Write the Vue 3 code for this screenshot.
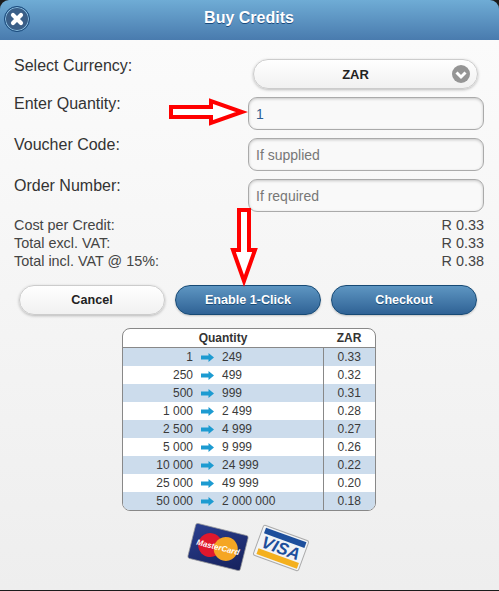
<script setup>
const rows = [
  ['1', '249', '0.33'], ['250', '499', '0.32'], ['500', '999', '0.31'],
  ['1 000', '2 499', '0.28'], ['2 500', '4 999', '0.27'], ['5 000', '9 999', '0.26'],
  ['10 000', '24 999', '0.22'], ['25 000', '49 999', '0.20'], ['50 000', '2 000 000', '0.18']
]
const summary = [
  ['Cost per Credit:', 'R 0.33'], ['Total excl. VAT:', 'R 0.33'], ['Total incl. VAT @ 15%:', 'R 0.38']
]
</script>

<template>
  <div class="dialog">
    <header class="head">
      <button class="close" aria-label="Close">
        <svg width="18" height="18" viewBox="0 0 18 18"><path d="M5 5l8 8M13 5l-8 8" stroke="#fff" stroke-width="4.200" stroke-linecap="round"/></svg>
      </button>
      <h1>Buy Credits</h1>
    </header>
    <main class="body">
      <div class="row first">
        <label>Select Currency:</label>
        <div class="select">
          <span>ZAR</span>
          <i class="chev"><svg width="18" height="18" viewBox="0 0 18 18"><path d="M4.500 7.500l4.500 4.500 4.500-4.500" fill="none" stroke="#fff" stroke-width="3"/></svg></i>
        </div>
      </div>
      <div class="row"><label>Enter Quantity:</label><input class="inp val" value="1" /></div>
      <div class="row"><label>Voucher Code:</label><input class="inp" placeholder="If supplied" /></div>
      <div class="row"><label>Order Number:</label><input class="inp" placeholder="If required" /></div>

      <div class="summary">
        <div v-for="s in summary" :key="s[0]" class="sumrow"><span>{{ s[0] }}</span><span>{{ s[1] }}</span></div>
      </div>

      <div class="buttons">
        <button class="btn light">Cancel</button>
        <button class="btn blue">Enable 1-Click</button>
        <button class="btn blue">Checkout</button>
      </div>

      <div class="tablewrap">
        <table>
          <colgroup><col class="c1" /><col class="c2" /><col /><col class="c4" /></colgroup>
          <thead><tr><th colspan="3">Quantity</th><th>ZAR</th></tr></thead>
          <tbody>
            <tr v-for="r in rows" :key="r[0]">
              <td class="from">{{ r[0] }}</td>
              <td class="arr"><svg width="13" height="9" viewBox="0 0 13 9"><path d="M0 2.500h7.500V0L13 4.500 7.500 9V6.500H0z" fill="#1d9bd1"/></svg></td>
              <td class="to">{{ r[1] }}</td>
              <td class="price">{{ r[2] }}</td>
            </tr>
          </tbody>
        </table>
      </div>

      <div class="cards">
        <svg width="62" height="52" viewBox="0 0 62 52">
          <defs>
            <linearGradient id="mcbg" x1="0" y1="0" x2="1" y2="1"><stop offset="0" stop-color="#2a3f8f"/><stop offset="1" stop-color="#16215c"/></linearGradient>
          </defs>
          <g transform="translate(31 26) rotate(14)">
            <rect x="-27" y="-18" width="54" height="36" rx="2" fill="url(#mcbg)" stroke="#9a9a9a" stroke-width=".7"/>
            <circle cx="-8" cy="0" r="12" fill="#e0182d"/>
            <circle cx="8" cy="0" r="12" fill="#f5a623"/>
            <text x="0" y="3" text-anchor="middle" class="mctext">MasterCard</text>
          </g>
        </svg>
        <svg class="visa" width="58" height="50" viewBox="0 0 58 50">
          <g transform="translate(29 25) rotate(20)">
            <rect x="-24" y="-16" width="48" height="32" rx="2" fill="#f2f4f6" stroke="#aaa" stroke-width="1"/>
            <rect x="-21" y="-14" width="43" height="6" fill="#1d4f9c"/>
            <rect x="-21" y="8" width="43" height="6" fill="#f4b01e"/>
            <text x="0" y="6" text-anchor="middle" class="visatext">VISA</text>
          </g>
        </svg>
      </div>

      <svg class="mark right" width="80" height="30" viewBox="0 0 80 30"><path d="M3 9H43V3L74 14 43 25V19H3z" fill="#fff" stroke="#f00" stroke-width="4"/></svg>
      <svg class="mark down" width="30" height="82" viewBox="0 0 30 82"><path d="M10 2H20V42H26L15 73 4 42H10z" fill="#fff" stroke="#f00" stroke-width="4"/></svg>
    </main>
  </div>
</template>

<style>
html, body { margin: 0; background: #1c1c1c; }
</style>

<style scoped>
.dialog { width: 499px; height: 590px; border-radius: 9px 9px 0 0; overflow: hidden; font-family: "Liberation Sans", Arial, sans-serif; color: #333; display: flex; flex-direction: column; }
.head { height: 40px; flex: none; padding-bottom: 4px; box-sizing: border-box; background: linear-gradient(#6facd5, #497bae); display: flex; align-items: center; justify-content: center; position: relative; }
.head h1 { margin: 0 1px 0 0; font-size: 16px; font-weight: 700; color: #fff; text-shadow: 0 1px 0 #194b7e; }
.close { position: absolute; left: 4px; top: 6px; width: 26px; height: 26px; margin: 0; padding: 0; box-sizing: border-box; border-radius: 50%; border: 1px solid #194b7e; background: #3a5f88; box-shadow: inset 0 0 0 1px #8cc0e2; display: flex; align-items: center; justify-content: center; }
.body { flex: 1; position: relative; background: linear-gradient(#fbfbfb, #eee); padding: 0 15px 0 14px; }
.row { display: flex; justify-content: space-between; align-items: flex-start; height: 33px; margin-bottom: 8px; }
.row.first { height: 30px; margin-top: 19px; padding-right: 6px; }
.row label { font-size: 16px; line-height: 18px; margin-top: -2px; }
.inp { width: 236px; height: 33px; box-sizing: border-box; margin: 0; padding: 0 7px; border: 1px solid #aaa; border-radius: 9px; background: #f9f9f9; box-shadow: inset 0 1px 3px rgba(0,0,0,.2); font: 14px "Liberation Sans", Arial, sans-serif; color: #2f5f92; outline: none; }
.inp::placeholder { color: #777; opacity: 1; }
.select { width: 225px; height: 30px; box-sizing: border-box; padding-right: 20px; border: 1px solid #ccc; border-radius: 15px; background: linear-gradient(#fff, #f1f1f1); box-shadow: 0 1px 3px rgba(0,0,0,.25); display: flex; align-items: center; justify-content: center; position: relative; font-size: 13px; font-weight: 700; color: #222; }
.chev { position: absolute; right: 7px; top: 5px; width: 18px; height: 18px; border-radius: 50%; background: #959595; display: flex; align-items: center; justify-content: center; }
.summary { margin-top: -4px; font-size: 14.400px; line-height: 18px; color: #444; }
.sumrow { display: flex; justify-content: space-between; }
.buttons { display: flex; gap: 10px; margin: 15px 0 0 5px; }
.btn { width: 146px; height: 30px; margin: 0; padding: 0; border-radius: 15px; font: 700 12.600px "Liberation Sans", Arial, sans-serif; }
.light { border: 1px solid #ccc; background: linear-gradient(#fff, #f1f1f1); color: #222; box-shadow: 0 1px 3px rgba(0,0,0,.25); }
.blue { border: 1px solid #174a75; background: linear-gradient(#5e96c2, #2f6295); color: #fff; text-shadow: 0 1px 0 #174a75; box-shadow: 0 1px 2px rgba(0,0,0,.2); }
.tablewrap { width: 254px; margin: 13px 0 0 108px; box-sizing: border-box; border: 1px solid #888; border-radius: 8px; overflow: hidden; background: #fff; }
table { width: 100%; border-collapse: collapse; table-layout: fixed; font-size: 12px; color: #3a3a3a; }
.c1 { width: 70px; }
.c2 { width: 29px; }
.c4 { width: 52px; }
th { height: 18px; padding: 0; font-size: 12px; font-weight: 700; color: #333; border-bottom: 1px solid #888; }
td { height: 18px; padding: 0; }
tbody tr:nth-child(odd) { background: #ccdcec; }
.from { text-align: right; }
.arr { text-align: center; line-height: 0; }
.to { text-align: left; }
.price { text-align: center; border-left: 1px solid #888; }
.cards { display: flex; justify-content: center; margin-top: 10px; padding-right: 1px; }
.cards .visa { margin: 2px 0 0 3px; }
.mctext { font: italic 700 8px "Liberation Sans", Arial, sans-serif; fill: #fff; }
.visatext { font: italic 700 17px "Liberation Sans", Arial, sans-serif; fill: #1d4f9c; }
.mark { position: absolute; }
.mark.right { left: 168px; top: 58px; }
.mark.down { left: 229px; top: 168px; }
</style>
